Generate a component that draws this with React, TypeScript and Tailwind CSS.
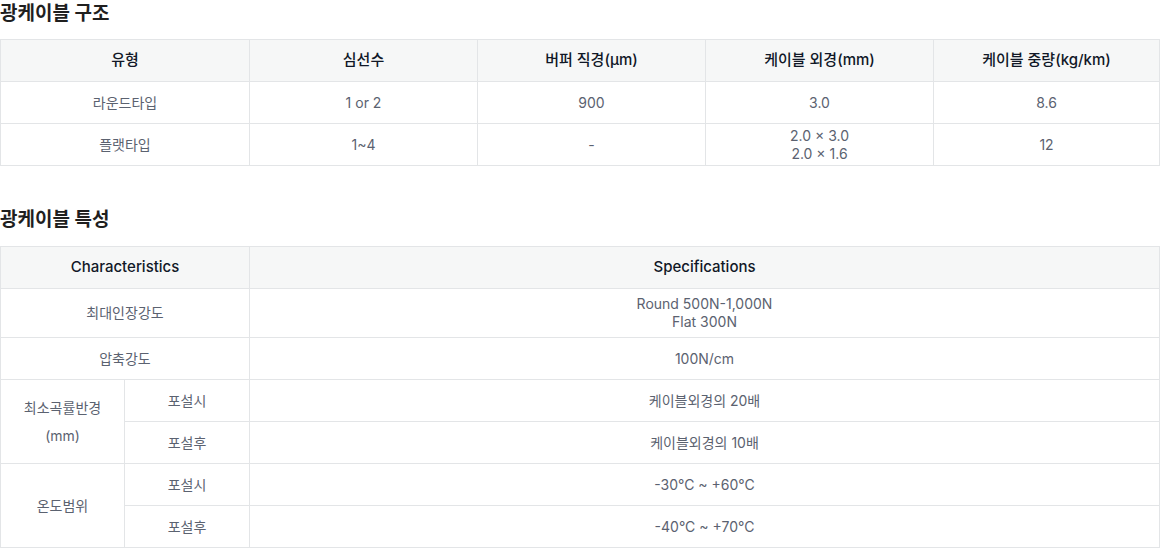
const font = { fontFamily: "Inter, 'Noto Sans CJK KR', sans-serif" };

const th = "border border-[#e3e5e7] bg-[#f6f7f7] font-medium text-[15px] text-[#111827] text-center align-middle";
const td = "border border-[#e3e5e7] text-[14px] text-[#5b6270] text-center align-middle leading-[18px]";

export default function App() {
  return (
    <main className="w-[1160px] bg-white" style={font}>
      <h2 className="text-[19px] font-bold text-[#1f1f1f] leading-[28px] h-[28px] mb-[11px]">광케이블 구조</h2>
      <table className="w-full border-collapse table-fixed">
        <colgroup>
          <col className="w-[249px]" />
          <col className="w-[228px]" />
          <col className="w-[228px]" />
          <col className="w-[228px]" />
          <col />
        </colgroup>
        <thead>
          <tr className="h-[42px]">
            <th className={th}>유형</th>
            <th className={th}>심선수</th>
            <th className={th}>버퍼 직경(μm)</th>
            <th className={th}>케이블 외경(mm)</th>
            <th className={th}>케이블 중량(kg/km)</th>
          </tr>
        </thead>
        <tbody>
          <tr className="h-[42px]">
            <td className={td}>라운드타입</td>
            <td className={td}>1 or 2</td>
            <td className={td}>900</td>
            <td className={td}>3.0</td>
            <td className={td}>8.6</td>
          </tr>
          <tr className="h-[42px]">
            <td className={td}>플랫타입</td>
            <td className={td}>1~4</td>
            <td className={td}>-</td>
            <td className={td}>
              2.0 × 3.0
              <br />
              2.0 × 1.6
            </td>
            <td className={td}>12</td>
          </tr>
        </tbody>
      </table>

      <h2 className="text-[19px] font-bold text-[#1f1f1f] leading-[28px] h-[28px] mt-[40px] mb-[12px]">광케이블 특성</h2>
      <table className="w-full border-collapse table-fixed">
        <colgroup>
          <col className="w-[124px]" />
          <col className="w-[125px]" />
          <col />
        </colgroup>
        <thead>
          <tr className="h-[42px]">
            <th className={th} colSpan={2}>Characteristics</th>
            <th className={th}>Specifications</th>
          </tr>
        </thead>
        <tbody>
          <tr className="h-[49px]">
            <td className={td} colSpan={2}>최대인장강도</td>
            <td className={td}>
              Round 500N-1,000N
              <br />
              Flat 300N
            </td>
          </tr>
          <tr className="h-[42px]">
            <td className={td} colSpan={2}>압축강도</td>
            <td className={td}>100N/cm</td>
          </tr>
          <tr className="h-[42px]">
            <td className={`${td} leading-[28px]`} rowSpan={2}>
              최소곡률반경
              <br />
              (mm)
            </td>
            <td className={td}>포설시</td>
            <td className={td}>케이블외경의 20배</td>
          </tr>
          <tr className="h-[42px]">
            <td className={td}>포설후</td>
            <td className={td}>케이블외경의 10배</td>
          </tr>
          <tr className="h-[42px]">
            <td className={td} rowSpan={2}>온도범위</td>
            <td className={td}>포설시</td>
            <td className={td}>-30°C ~ +60°C</td>
          </tr>
          <tr className="h-[42px]">
            <td className={td}>포설후</td>
            <td className={td}>-40°C ~ +70°C</td>
          </tr>
        </tbody>
      </table>
    </main>
  );
}
